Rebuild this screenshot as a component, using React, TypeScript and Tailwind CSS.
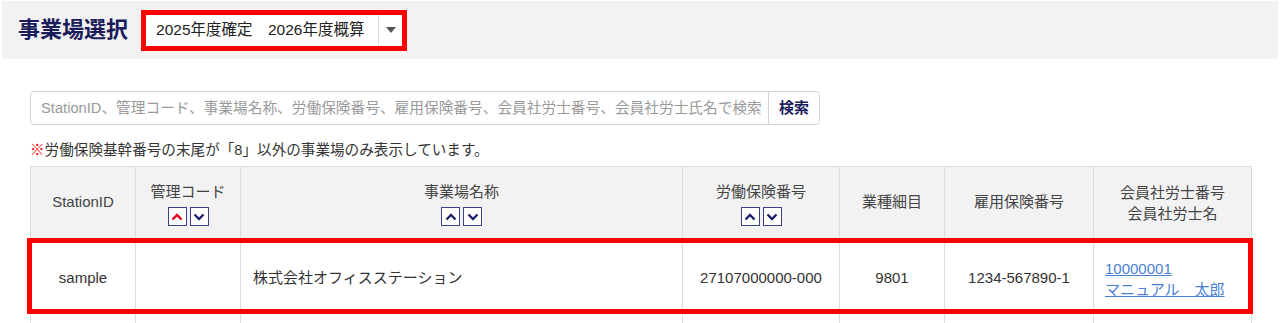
import React from 'react';

const FONT = { fontFamily: '"Liberation Sans", "Noto Sans CJK JP", sans-serif' };

const SortButtons: React.FC<{ activeUp?: boolean }> = ({ activeUp }) => (
  <div className="flex justify-center gap-[3px] mt-[4px]">
    <button className="w-[19px] h-[19px] border border-[#3b3f8f] bg-white flex items-center justify-center">
      <svg width="12" height="8" viewBox="0 0 12 8">
        <path d="M1.5 6.5 L6 2 L10.5 6.5" fill="none" stroke={activeUp ? '#e3001b' : '#1d1f6b'} strokeWidth="2.4" />
      </svg>
    </button>
    <button className="w-[19px] h-[19px] border border-[#3b3f8f] bg-white flex items-center justify-center">
      <svg width="12" height="8" viewBox="0 0 12 8">
        <path d="M1.5 1.5 L6 6 L10.5 1.5" fill="none" stroke="#1d1f6b" strokeWidth="2.4" />
      </svg>
    </button>
  </div>
);

export default function App() {
  return (
    <div className="w-[1280px] h-[323px] bg-white overflow-hidden text-[#333]" style={FONT}>
      {/* header band */}
      <div className="mx-[2px] mt-[1px] h-[58px] bg-[#f2f2f2] flex items-center pl-[16px]">
        <h1 className="text-[22px] font-bold text-[#1b1c5c] leading-none">事業場選択</h1>
        <div className="ml-[13px] border-[5px] border-[#ff0000]">
          <div className="w-[256px] h-[31px] bg-white flex items-center">
            <span className="flex-1 pl-[10px] text-[15.5px] text-[#222] whitespace-nowrap">2025年度確定　2026年度概算</span>
            <div className="w-[24px] h-full border-l border-[#ddd] flex items-center justify-center">
              <svg width="10" height="6" viewBox="0 0 10 6">
                <path d="M0 0 H10 L5 6 Z" fill="#555" />
              </svg>
            </div>
          </div>
        </div>
      </div>

      {/* search */}
      <div className="pl-[30px] pt-[32px]">
        <div className="w-[790px] h-[34px] flex border border-[#d4d4d4] rounded-[4px] bg-white">
          <div className="flex-1 flex items-center pl-[10px] text-[14.7px] text-[#9a9a9a] whitespace-nowrap overflow-hidden">
            StationID、管理コード、事業場名称、労働保険番号、雇用保険番号、会員社労士番号、会員社労士氏名で検索
          </div>
          <button className="w-[51px] border-l border-[#d4d4d4] text-[15px] font-bold text-[#1b1c5c]">検索</button>
        </div>
        <p className="mt-[15px] text-[14.6px] leading-[20px] text-[#333]">
          <span className="text-[#ff0000]">※</span>労働保険基幹番号の末尾が「8」以外の事業場のみ表示しています。
        </p>
      </div>

      {/* table */}
      <div className="relative ml-[30px] mt-[6px] w-[1221px]">
        <table className="w-full table-fixed border-collapse text-[15px]">
          <colgroup>
            <col className="w-[105px]" />
            <col className="w-[105px]" />
            <col className="w-[442px]" />
            <col className="w-[157px]" />
            <col className="w-[105px]" />
            <col className="w-[149px]" />
            <col className="w-[158px]" />
          </colgroup>
          <thead>
            <tr className="h-[72px] bg-[#f2f2f2] text-[#444]">
              <th className="border border-[#dcdcdc] font-normal">StationID</th>
              <th className="border border-[#dcdcdc] font-normal pt-[2px]">
                管理コード
                <SortButtons activeUp />
              </th>
              <th className="border border-[#dcdcdc] font-normal pt-[2px]">
                事業場名称
                <SortButtons />
              </th>
              <th className="border border-[#dcdcdc] font-normal pt-[2px]">
                労働保険番号
                <SortButtons />
              </th>
              <th className="border border-[#dcdcdc] font-normal">業種細目</th>
              <th className="border border-[#dcdcdc] font-normal">雇用保険番号</th>
              <th className="border border-[#dcdcdc] font-normal leading-[21px]">
                会員社労士番号
                <br />
                会員社労士名
              </th>
            </tr>
          </thead>
          <tbody>
            <tr className="h-[74px]">
              <td className="border border-[#dcdcdc] text-center pt-[6px]">sample</td>
              <td className="border border-[#dcdcdc]"></td>
              <td className="border border-[#dcdcdc] pl-[12px] pt-[6px]">株式会社オフィスステーション</td>
              <td className="border border-[#dcdcdc] text-center pt-[6px]">27107000000-000</td>
              <td className="border border-[#dcdcdc] text-center pt-[6px]">9801</td>
              <td className="border border-[#dcdcdc] text-center pt-[6px]">1234-567890-1</td>
              <td className="border border-[#dcdcdc] pl-[11px] pt-[6px] leading-[21px]">
                <a className="text-[#4a7fd8] underline">10000001</a>
                <br />
                <a className="text-[#4a7fd8] underline">マニュアル　太郎</a>
              </td>
            </tr>
            <tr className="h-[40px]">
              <td className="border border-[#dcdcdc]"></td>
              <td className="border border-[#dcdcdc]"></td>
              <td className="border border-[#dcdcdc]"></td>
              <td className="border border-[#dcdcdc]"></td>
              <td className="border border-[#dcdcdc]"></td>
              <td className="border border-[#dcdcdc]"></td>
              <td className="border border-[#dcdcdc]"></td>
            </tr>
          </tbody>
        </table>
        {/* highlight overlay */}
        <div className="absolute left-[-3px] right-[-2px] top-[72px] h-[76px] border-[5px] border-[#ff0000] pointer-events-none" />
      </div>
    </div>
  );
}
